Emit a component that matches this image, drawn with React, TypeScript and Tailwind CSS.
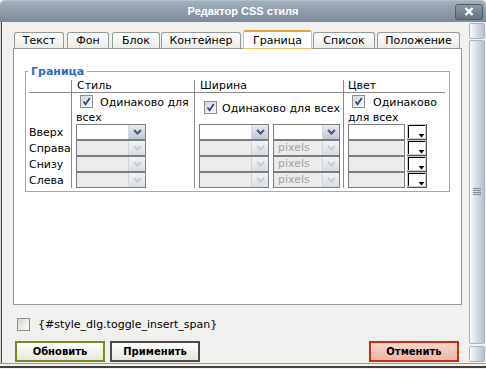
import { clsx } from "clsx";

const tabs = [
  { label: "Текст", cls: "w-[50px]" },
  { label: "Фон", cls: "ml-[3px] w-[42px]" },
  { label: "Блок", cls: "ml-[3px] w-[48px]" },
  { label: "Контейнер", cls: "ml-[1px] w-[80px]" },
  { label: "Граница", cls: "ml-[2px] w-[69px]", active: true },
  { label: "Список", cls: "ml-[1px] w-[62px]" },
  { label: "Положение", cls: "ml-[2px] w-[83px]" },
];

const sides = [
  { label: "Вверх", on: true },
  { label: "Справа", on: false },
  { label: "Снизу", on: false },
  { label: "Слева", on: false },
];

const vl = "border-l border-[#8a8a8a]";

function Check({ checked = false }: { checked?: boolean }) {
  return (
    <span className="inline-flex h-[13px] w-[13px] shrink-0 items-center justify-center border border-[#8f8f8f] bg-gradient-to-br from-[#d6d6d0] to-[#fbfbfa]">
      {checked && (
        <svg width="11" height="11" viewBox="0 0 11 11">
          <path d="M2.5 5.5 L4.6 8.2 L8.8 2" fill="none" stroke="#2846a0" strokeWidth="1.8" />
        </svg>
      )}
    </span>
  );
}

function Sel({ cls, disabled = false, text = "" }: { cls: string; disabled?: boolean; text?: string }) {
  return (
    <div
      className={clsx(
        "flex h-[16px] border border-[#7d7d7d]",
        disabled ? "bg-[#ebebeb]" : "bg-white",
        cls
      )}
    >
      <span className="flex-1 pl-[4px] leading-[14px] text-[#a4a4a4]">{text}</span>
      <span
        className={clsx(
          "flex w-[17px] items-center justify-center border-l border-[#d0d6de]",
          disabled
            ? "bg-gradient-to-b from-[#f2f4f7] to-[#d8dde4]"
            : "bg-gradient-to-b from-[#e8edf3] to-[#bec8d5]"
        )}
      >
        <svg width="9" height="6" viewBox="0 0 9 6">
          <path
            d="M1 1 L4.5 4.5 L8 1"
            fill="none"
            stroke={disabled ? "#c5ccd6" : "#4b586b"}
            strokeWidth="2"
          />
        </svg>
      </span>
    </div>
  );
}

function ColorBtn() {
  return (
    <span className="flex h-[16px] w-[20px] border-r border-b border-[#555] bg-[#c8c8c8] p-[1px]">
      <span className="relative flex-1 border-l border-t border-black bg-white">
        <span className="absolute right-0 bottom-0 h-[5px] w-[7px] bg-white">
          <svg width="7" height="5" viewBox="0 0 7 5" className="block">
            <path d="M0.5 1 L6.5 1 L3.5 4.5 Z" fill="#000" />
          </svg>
        </span>
      </span>
    </span>
  );
}

export default function App() {
  return (
    <div className="flex h-[369px] w-[486px] flex-col overflow-hidden bg-[#f0f0ee] font-['DejaVu_Sans',sans-serif] text-[11px] leading-[13px] text-black">
      {/* title bar */}
      <div className="grid h-[22px] grid-cols-[1fr_auto_1fr] items-center rounded-t-[5px] border-t border-[#b4c0ca] bg-gradient-to-b from-[#a4b1bc] via-[#8d9ca9] to-[#7b8a98]">
        <span />
        <span className="font-['Liberation_Sans',sans-serif] text-[11px] font-bold text-white">
          Редактор CSS стиля
        </span>
        <button className="mr-[3px] flex h-[16px] w-[28px] items-center justify-center justify-self-end rounded-[3px] border border-[#4f5b66] bg-gradient-to-b from-[#8d9aa6] to-[#67747f]">
          <svg width="10" height="9" viewBox="0 0 10 9">
            <path d="M1.5 1 L8.5 8 M8.5 1 L1.5 8" stroke="#fff" strokeWidth="2.4" />
          </svg>
        </button>
      </div>

      {/* body */}
      <div className="flex flex-1 border-l border-[#d2d2d0]">
        <div className="flex flex-1 border-l border-[#4f463c]">
          <main className="flex w-[467px] flex-col">
            <div className="ml-[12px] mt-[8px] flex h-[18px] items-end">
              {tabs.map((t) =>
                t.active ? (
                  <div
                    key={t.label}
                    className={clsx(
                      "relative z-10 -mb-[1px] flex h-[19px] items-center justify-center rounded-t-[3px] border border-t-2 border-[#edc06a] border-t-[#e3a13a] bg-white",
                      t.cls
                    )}
                  >
                    {t.label}
                  </div>
                ) : (
                  <div
                    key={t.label}
                    className={clsx(
                      "flex h-[16px] items-center justify-center rounded-t-[3px] border border-b-0 border-[#919b9c] bg-gradient-to-b from-white to-[#ecebe5]",
                      t.cls
                    )}
                  >
                    {t.label}
                  </div>
                )
              )}
            </div>

            <div className="ml-[11px] h-[257px] w-[449px] border border-[#919b9c] bg-white">
              <fieldset className="ml-[11px] mt-[16px] w-[425px] border border-[#a0a8aa] px-[3px] pb-[3px]">
                <legend className="-ml-[1px] px-[3px] font-bold leading-[13px] text-[#2b6bc4]">
                  Граница
                </legend>
                <div className="mt-[2px] grid grid-cols-[42px_123px_149px_102px]">
                  <div className="h-[13px] border-b border-[#8a8a8a]" />
                  <div className={clsx(vl, "h-[13px] border-b pl-[5px] leading-[12px]")}>Стиль</div>
                  <div className={clsx(vl, "h-[13px] border-b pl-[5px] leading-[12px]")}>Ширина</div>
                  <div className={clsx(vl, "h-[13px] border-b pl-[4px] leading-[12px]")}>Цвет</div>

                  <div className="h-[31px]" />
                  <div className={clsx(vl, "flex h-[31px] flex-col justify-center")}>
                    <div className="flex h-[18px] items-center">
                      <span className="ml-[8px]">
                        <Check checked />
                      </span>
                      <span className="ml-[7px]">Одинаково для</span>
                    </div>
                    <div className="pl-[4px]">всех</div>
                  </div>
                  <div className={clsx(vl, "flex h-[31px] items-center")}>
                    <span className="ml-[9px]">
                      <Check checked />
                    </span>
                    <span className="ml-[5px]">Одинаково для всех</span>
                  </div>
                  <div className={clsx(vl, "flex h-[31px] flex-col justify-center")}>
                    <div className="flex h-[18px] items-center">
                      <span className="ml-[8px]">
                        <Check checked />
                      </span>
                      <span className="ml-[8px]">Одинаково</span>
                    </div>
                    <div className="pl-[4px]">для всех</div>
                  </div>

                  {sides.map((s) => (
                    <div key={s.label} className="contents">
                      <div className="flex h-[16px] items-center whitespace-nowrap">{s.label}</div>
                      <div className={clsx(vl, "h-[16px] pl-[4px]")}>
                        <Sel cls="w-[70px]" disabled={!s.on} />
                      </div>
                      <div className={clsx(vl, "flex h-[16px] gap-[4px] pl-[4px]")}>
                        <Sel cls="w-[70px]" disabled={!s.on} />
                        <Sel cls="w-[67px]" disabled={!s.on} text={s.on ? "" : "pixels"} />
                      </div>
                      <div className={clsx(vl, "flex h-[16px] gap-[2px] pl-[4px]")}>
                        <span
                          className={clsx(
                            "h-[16px] w-[57px] border border-[#7d7d7d]",
                            s.on ? "bg-white" : "bg-[#ebebeb]"
                          )}
                        />
                        <ColorBtn />
                      </div>
                    </div>
                  ))}
                </div>
              </fieldset>
            </div>

            <div className="ml-[15px] mt-[13px] flex h-[13px] items-center">
              <Check />
              <span className="ml-[8px]">{"{#style_dlg.toggle_insert_span}"}</span>
            </div>

            <div className="ml-[13px] mr-[10px] mt-[10px] flex h-[21px] text-[10px] font-bold">
              <button className="flex h-[21px] w-[90px] items-center justify-center border-2 border-[#7a8a20] bg-gradient-to-b from-white to-[#e6e6de]">
                Обновить
              </button>
              <button className="ml-[5px] flex h-[21px] w-[90px] items-center justify-center border-2 border-[#4a4a4a] bg-gradient-to-b from-white to-[#e6e6de]">
                Применить
              </button>
              <button className="ml-auto flex h-[21px] w-[90px] items-center justify-center border-2 border-[#c4300c] bg-gradient-to-b from-[#f9d6ce] to-[#eeb3a7]">
                Отменить
              </button>
            </div>
          </main>

          {/* scrollbar */}
          <div className="flex w-[16px] flex-col gap-[1px] py-[1px]">
            <div className="h-[16px] rounded-[2px] border border-[#a9b3bf] bg-gradient-to-r from-[#f7f9fc] via-[#d3dce7] to-[#b8c2ce]" />
            <div className="mb-[1px] flex flex-1 items-center justify-center rounded-[2px] border border-[#a9b3bf] bg-gradient-to-r from-[#f7f9fc] via-[#d3dce7] to-[#b8c2ce]">
              <svg width="8" height="8" viewBox="0 0 8 8">
                <path d="M0 0.5 H8 M0 2.5 H8 M0 4.5 H8 M0 6.5 H8" stroke="#7c8a9c" strokeWidth="1" />
              </svg>
            </div>
            <div className="h-[16px] rounded-[2px] border border-[#a9b3bf] bg-gradient-to-r from-[#f7f9fc] via-[#d3dce7] to-[#b8c2ce]" />
          </div>
          <div className="w-[1px]" />
        </div>
      </div>

      <div className="h-[6px] border-t border-[#9a9a9a]">
        <div className="mt-[2px] h-[2px] bg-[#45403a]" />
      </div>
    </div>
  );
}
